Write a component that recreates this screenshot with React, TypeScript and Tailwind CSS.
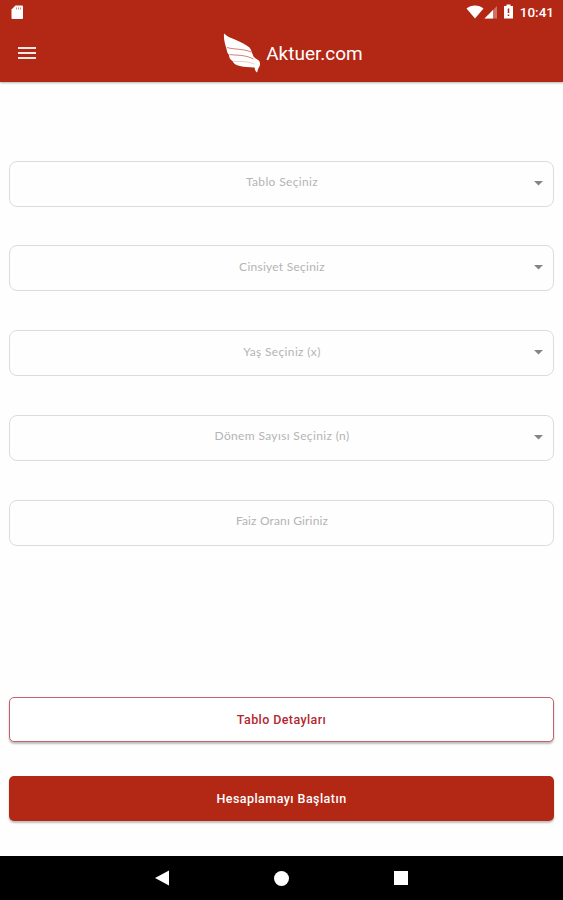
import clsx from "clsx";

const fields = [
  { label: "Tablo Seçiniz", select: true, text: "tracking-[0.35px]" },
  { label: "Cinsiyet Seçiniz", select: true, text: "tracking-[0.25px]" },
  { label: "Yaş Seçiniz (x)", select: true, text: "tracking-[0.35px]" },
  { label: "Dönem Sayısı Seçiniz (n)", select: true, text: "tracking-[0.35px]" },
  { label: "Faiz Oranı Giriniz", select: false, text: "tracking-[0.15px]" },
];

function WingLogo() {
  return (
    <svg width="38" height="40" viewBox="0 0 38 40" className="shrink-0">
      <path
        d="M1 0.500C4 3.500 8 5 13 7C18 9.500 23 11.500 26.500 14.500C28.500 17 29 20 30.500 23.500C31.500 25.500 35.500 26 36.500 28.500C37.500 31 37 33 35.500 35L34 39.500C32.500 38.500 32 37 31.500 34.500C26 34 20 34 15 32.500C12 31.500 10.500 30.500 9.500 28C7.500 27 6 25 6 22C4.500 20.500 4 18.500 3.500 16C2 11 0.500 6 1 0.500Z"
        fill="white"
      />
      <path
        d="M4 14.500C10 16.500 19 15.500 28.500 19M6.500 21.500C13 22.500 22 21.500 30.500 26"
        fill="none"
        stroke="#b32715"
        strokeOpacity="0.65"
        strokeWidth="0.9"
      />
      <path d="M10.500 28.500C17 28.500 24 28 31 31" fill="none" stroke="#b32715" strokeOpacity="0.35" strokeWidth="0.7" />
    </svg>
  );
}

function StatusBar() {
  return (
    <div className="flex h-6 items-center justify-between pr-[9px] pl-[11px]">
      <svg width="13" height="15" viewBox="0 0 13 15">
        <path d="M4.500 0.500H11Q12 0.500 12 1.500V13Q12 14 11 14H1.500Q0.500 14 0.500 13V4.500Z" fill="white" />
        <path d="M5.500 2.500V4.500M7.500 2.500V4.500M9.500 2.500V4.500" stroke="#b32715" strokeOpacity="0.6" strokeWidth="0.9" />
      </svg>
      <div className="flex items-center">
        <svg width="49" height="16" viewBox="0 0 49 16">
          <path d="M0.500 4.500C5 0.500 13 0.500 17.500 4.500L9 14.500Z" fill="white" />
          <path d="M31 2V14.500H18.500Z" fill="white" fillOpacity="0.35" />
          <path d="M27 6V14.500H18.500Z" fill="white" />
          <path d="M40.500 0.500H44.500V2H47V14.500H38V2H40.500Z" fill="white" />
          <path d="M42.500 4.500V9M42.500 10.500V12" stroke="#b32715" strokeWidth="1.5" />
        </svg>
        <span className="ml-[5px] text-[13.500px] leading-4 font-medium">10:41</span>
      </div>
    </div>
  );
}

function Header() {
  return (
    <header className="relative h-[82px] shrink-0 bg-[#b32715] text-white shadow-[0_1px_2px_rgba(0,0,0,0.3)]">
      <StatusBar />
      <div className="grid h-[58px] grid-cols-[1fr_auto_1fr] items-center">
        <button className="ml-[18px] flex w-[18px] flex-col gap-[3px]" aria-label="Menu">
          <span className="h-[2px] w-full bg-white/90" />
          <span className="h-[2px] w-full bg-white/90" />
          <span className="h-[2px] w-full bg-white/90" />
        </button>
        <div className="ml-[23px] flex items-center">
          <WingLogo />
          <h1 className="ml-[5px] pt-[2px] text-[19px] leading-6">Aktuer.com</h1>
        </div>
      </div>
    </header>
  );
}

function Field({ label, select, text }: { label: string; select: boolean; text: string }) {
  return (
    <div className="flex h-[46px] items-center justify-center rounded-lg border border-[#dcdcdc]">
      {/* Spacer keeps the label centred next to the arrow */}
      <span className="w-6" />
      <span className={clsx("flex-1 pb-[3px] pl-px text-center font-['Lato',sans-serif] text-[12px] text-[#b4b4b4]", text)}>{label}</span>
      <span className="flex w-6 pb-px">
        {select && (
          <svg width="9" height="5" viewBox="0 0 9 5" className="ml-[5px]">
            <path d="M0 0H9L4.500 4.500Z" fill="#858585" />
          </svg>
        )}
      </span>
    </div>
  );
}

function NavigationBar() {
  return (
    <nav className="flex h-[44px] shrink-0 items-center justify-center gap-[105px] bg-black pr-px">
      <svg width="15" height="16" viewBox="0 0 15 16">
        <path d="M15 0.500V15.500L1 8Z" fill="white" />
      </svg>
      <span className="size-[15px] rounded-full bg-white" />
      <span className="size-[14px] bg-white" />
    </nav>
  );
}

export default function App() {
  return (
    <div className="flex h-[900px] w-full flex-col bg-[#fefefe] font-['Roboto',sans-serif]">
      <Header />
      <main className="flex flex-1 flex-col px-[9px] pt-[78.500px]">
        <div className="flex flex-col gap-[38.750px]">
          {fields.map((field) => (
            <Field key={field.label} {...field} />
          ))}
        </div>
        <div className="mt-auto mb-[35px] flex flex-col gap-[34px]">
          <button className="h-[45px] rounded-[5px] border border-[#c8606c] bg-white pt-px text-[12.500px] font-medium tracking-[0.4px] text-[#b32731] shadow-[0_2px_2px_rgba(0,0,0,0.25)]">
            Tablo Detayları
          </button>
          <button className="h-[45px] rounded-[5px] bg-[#b32715] pt-px text-[12.500px] font-medium tracking-[0.45px] text-white shadow-[0_2px_2px_rgba(0,0,0,0.25)]">
            Hesaplamayı Başlatın
          </button>
        </div>
      </main>
      <NavigationBar />
    </div>
  );
}
